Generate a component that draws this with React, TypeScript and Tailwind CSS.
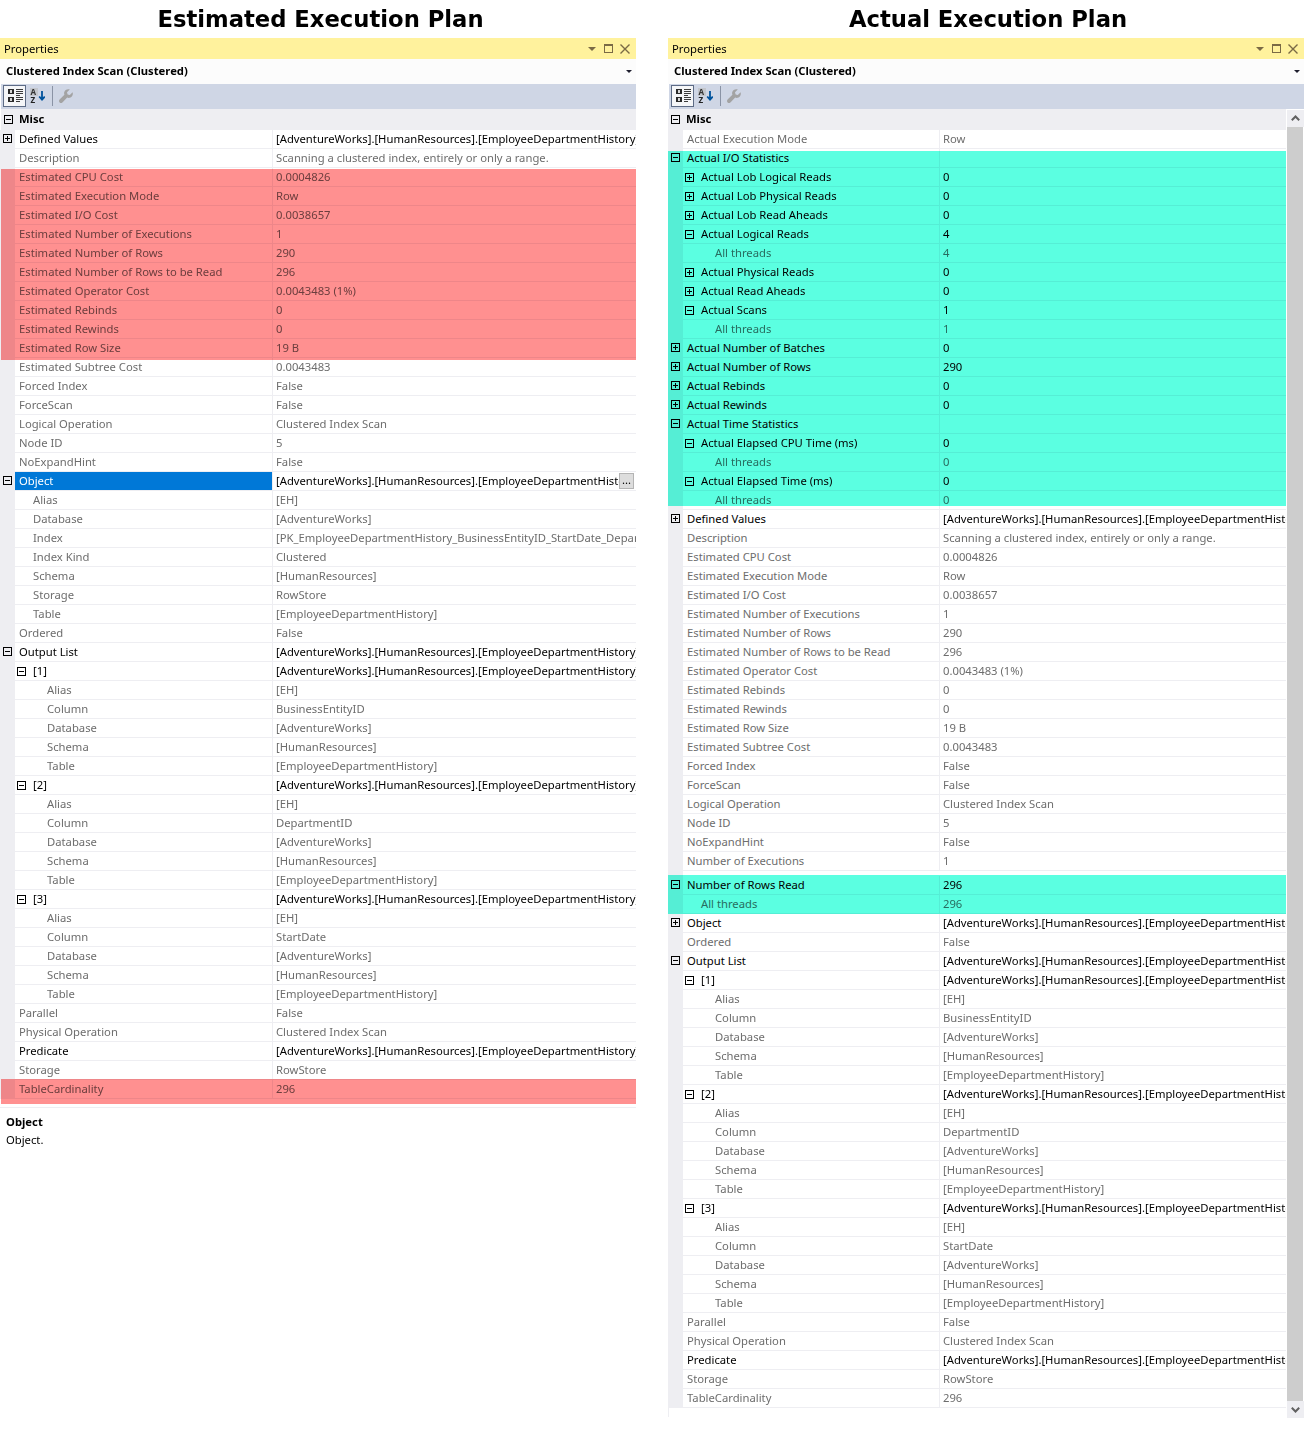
type RowData = [number, string, string, string?];

const FULL = "[AdventureWorks].[HumanResources].[EmployeeDepartmentHistory].[BusinessEntityID]";

const OUTPUT_COLUMN = (n: string, col: string): RowData[] => [
  [1, n, FULL, "-"],
  [2, "Alias", "[EH]"],
  [2, "Column", col],
  [2, "Database", "[AdventureWorks]"],
  [2, "Schema", "[HumanResources]"],
  [2, "Table", "[EmployeeDepartmentHistory]"],
];

const OUTPUT_LIST: RowData[] = [
  [0, "Output List", FULL, "-"],
  ...OUTPUT_COLUMN("[1]", "BusinessEntityID"),
  ...OUTPUT_COLUMN("[2]", "DepartmentID"),
  ...OUTPUT_COLUMN("[3]", "StartDate"),
  [0, "Parallel", "False"],
  [0, "Physical Operation", "Clustered Index Scan"],
  [0, "Predicate", FULL],
  [0, "Storage", "RowStore"],
  [0, "TableCardinality", "296"],
];

const ESTIMATES: RowData[] = [
  [0, "Estimated CPU Cost", "0.0004826"],
  [0, "Estimated Execution Mode", "Row"],
  [0, "Estimated I/O Cost", "0.0038657"],
  [0, "Estimated Number of Executions", "1"],
  [0, "Estimated Number of Rows", "290"],
  [0, "Estimated Number of Rows to be Read", "296"],
  [0, "Estimated Operator Cost", "0.0043483 (1%)"],
  [0, "Estimated Rebinds", "0"],
  [0, "Estimated Rewinds", "0"],
  [0, "Estimated Row Size", "19 B"],
  [0, "Estimated Subtree Cost", "0.0043483"],
  [0, "Forced Index", "False"],
  [0, "ForceScan", "False"],
  [0, "Logical Operation", "Clustered Index Scan"],
  [0, "Node ID", "5"],
  [0, "NoExpandHint", "False"],
];

const HEAD: RowData[] = [
  [0, "Defined Values", FULL, "+"],
  [0, "Description", "Scanning a clustered index, entirely or only a range."],
];

const LEFT_ROWS: RowData[] = [
  ...HEAD,
  ...ESTIMATES,
  [0, "Object", FULL, "-"],
  [1, "Alias", "[EH]"],
  [1, "Database", "[AdventureWorks]"],
  [1, "Index", "[PK_EmployeeDepartmentHistory_BusinessEntityID_StartDate_DepartmentID]"],
  [1, "Index Kind", "Clustered"],
  [1, "Schema", "[HumanResources]"],
  [1, "Storage", "RowStore"],
  [1, "Table", "[EmployeeDepartmentHistory]"],
  [0, "Ordered", "False"],
  ...OUTPUT_LIST,
];

const RIGHT_TOP: RowData[] = [
  [0, "Actual Execution Mode", "Row"],
  [0, "Actual I/O Statistics", "", "-"],
  [1, "Actual Lob Logical Reads", "0", "+"],
  [1, "Actual Lob Physical Reads", "0", "+"],
  [1, "Actual Lob Read Aheads", "0", "+"],
  [1, "Actual Logical Reads", "4", "-"],
  [2, "All threads", "4"],
  [1, "Actual Physical Reads", "0", "+"],
  [1, "Actual Read Aheads", "0", "+"],
  [1, "Actual Scans", "1", "-"],
  [2, "All threads", "1"],
  [0, "Actual Number of Batches", "0", "+"],
  [0, "Actual Number of Rows", "290", "+"],
  [0, "Actual Rebinds", "0", "+"],
  [0, "Actual Rewinds", "0", "+"],
  [0, "Actual Time Statistics", "", "-"],
  [1, "Actual Elapsed CPU Time (ms)", "0", "-"],
  [2, "All threads", "0"],
  [1, "Actual Elapsed Time (ms)", "0", "-"],
  [2, "All threads", "0"],
  ...HEAD,
  ...ESTIMATES,
  [0, "Number of Executions", "1"],
];

const RIGHT_BOTTOM: RowData[] = [
  [0, "Number of Rows Read", "296", "-"],
  [1, "All threads", "296"],
  [0, "Object", FULL, "+"],
  [0, "Ordered", "False"],
  ...OUTPUT_LIST,
];

const Expander = ({ kind }: { kind: string }) => (
  <svg width="9" height="9" viewBox="0 0 9 9" className="shrink-0" shapeRendering="crispEdges">
    <rect x="0.5" y="0.5" width="8" height="8" fill="none" stroke="#000" />
    <path d={kind === "+" ? "M2 4.5H7M4.5 2V7" : "M2 4.5H7"} stroke="#000" />
  </svg>
);

const Row = ({ row, nameWidth, selected }: { row: RowData; nameWidth: string; selected?: boolean }) => {
  const [level, name, value, exp] = row;
  const dark = !!exp || name === "Predicate";
  const color = dark ? "text-black" : "text-[#6d6d6d]";
  return (
    <div className="flex h-[19px]">
      <div className="w-[15px] shrink-0 bg-[#eeeef2] pl-[3px] pt-[4px]">
        {level === 0 && exp && <Expander kind={exp} />}
      </div>
      <div className="flex min-w-0 flex-1 border-b border-[#eeeef2] bg-white">
        <div className={`${nameWidth} flex h-[18px] shrink-0 items-center border-r border-[#eeeef2] ${selected ? "bg-[#0078d7] text-white" : color}`}>
          {level === 1 && exp ? (
            <div className="flex items-center gap-[7px] pl-[2px]">
              <Expander kind={exp} />
              <span>{name}</span>
            </div>
          ) : (
            <span className={level === 0 ? "pl-[4px]" : level === 1 ? "pl-[18px]" : "pl-[32px]"}>{name}</span>
          )}
        </div>
        <div className={`relative min-w-0 flex-1 overflow-hidden pl-[3px] ${color}`}>
          {value}
          {selected && (
            <div className="absolute right-0 top-0 h-full w-[17px] bg-white pt-px">
              <div className="flex h-[16px] w-[15px] items-center justify-center border border-[#b4b4b4] bg-[#dddddd] pb-[2px] text-black">
                ...
              </div>
            </div>
          )}
        </div>
      </div>
    </div>
  );
};

const Category = () => (
  <div className="flex h-[20px] bg-[#eeeef2] font-bold text-black">
    <div className="w-[15px] shrink-0 pl-[3px] pt-[5px]">
      <Expander kind="-" />
    </div>
    <span className="pl-[3px]">Misc</span>
  </div>
);

const CategorizedIcon = () => (
  <svg width="15" height="14" viewBox="0 0 15 14" shapeRendering="crispEdges">
    <rect x="0" y="0" width="6" height="5" fill="#2a2a2a" />
    <rect x="2" y="1" width="2" height="3" fill="#d8d8d8" />
    <rect x="0" y="8" width="6" height="5" fill="#2a2a2a" />
    <rect x="2" y="9" width="2" height="3" fill="#d8d8d8" />
    <path d="M8 .5h7M8 2.5h7M8 4.5h7M8 6.5h4M8 8.5h7M8 10.5h7M8 12.5h4" stroke="#3c3c3c" />
  </svg>
);

const SortIcon = () => (
  <svg width="15" height="16" viewBox="0 0 15 16">
    <rect x="0" y="0" width="8" height="8" fill="#c3c6cc" />
    <text x="0.6" y="7" fontSize="8" fontWeight="700" fill="#333">A</text>
    <text x="0.6" y="15" fontSize="8" fontWeight="700" fill="#222">Z</text>
    <path d="M12 3v8.5M9.2 8.5l2.8 3.2 2.8-3.2" fill="none" stroke="#00539c" strokeWidth="1.8" />
  </svg>
);

const WrenchIcon = () => (
  <svg width="14" height="14" viewBox="0 0 14 14">
    <path
      d="M13.6 3.2 10.8 6 8.6 5.4 8 3.2 10.8.4C8.6-.4 5.8.8 5.2 3.2 5 4.2 5.1 5 5.4 5.8L.6 10.6C-.2 11.4-.2 12.6.6 13.4 1.4 14.2 2.6 14.2 3.4 13.4L8.2 8.6C9 8.9 9.8 9 10.8 8.8 13.2 8.2 14.4 5.4 13.6 3.2Z"
      fill="#a3a3a3"
    />
  </svg>
);

const TitleIcons = () => (
  <div className="flex items-center">
    <svg width="8" height="4" viewBox="0 0 8 4"><path d="M0 0h8L4 4z" fill="#7a6a45" /></svg>
    <svg width="9" height="9" viewBox="0 0 9 9" className="ml-[8px]" shapeRendering="crispEdges">
      <rect x="0.5" y="0.5" width="8" height="8" fill="none" stroke="#7a6a45" />
      <path d="M0 1.5h9" stroke="#7a6a45" />
    </svg>
    <svg width="10" height="10" viewBox="0 0 10 10" className="ml-[7px]">
      <path d="M.5.5l9 9M9.5.5l-9 9" stroke="#7a6a45" strokeWidth="1.4" />
    </svg>
  </div>
);

const Header = () => (
  <>
    <div className="flex h-[21px] items-center justify-between bg-[#fff29d] pl-[4px] pr-[6px] text-black">
      <span>Properties</span>
      <TitleIcons />
    </div>
    <div className="flex h-[25px] items-center justify-between bg-[#fcfcfc] pb-px pl-[6px] pr-[4px] font-bold text-black">
      <span>Clustered Index Scan (Clustered)</span>
      <svg width="6" height="3" viewBox="0 0 6 3"><path d="M0 0h6L3 3z" fill="#1e1e2e" /></svg>
    </div>
    <div className="border-l border-white">
      <div className="flex h-[25px] items-center bg-[#cfd6e5] pb-px pl-[2px]">
        <div className="flex h-[22px] w-[23px] items-center justify-center border border-[#5d6b85] bg-[#f5f6f8] pl-px">
          <CategorizedIcon />
        </div>
        <div className="ml-[4px]">
          <SortIcon />
        </div>
        <div className="ml-[7px] h-[20px] w-px bg-[#8a93a5]" />
        <div className="ml-[6px]">
          <WrenchIcon />
        </div>
      </div>
    </div>
  </>
);

const LeftPanel = () => (
  <div className="w-[636px] shrink-0">
    <h1 className="flex h-[38px] items-center justify-center pb-px pl-[5px] text-[22.7px] font-bold text-black [font-family:'DejaVu_Sans',sans-serif]">
      Estimated Execution Plan
    </h1>
    <Header />
    <div className="relative">
      <div className="border-b border-[#eeeef2] pb-[8px]">
        <div className="border-l border-white">
          <div className="bg-[#eeeef2] pt-px">
            <Category />
          </div>
        </div>
        {LEFT_ROWS.map((row, i) => (
          <Row key={i} row={row} nameWidth="w-[258px]" selected={i === 18} />
        ))}
      </div>
      <div className="absolute left-px right-0 top-[60px] h-[191px] bg-[#ff9090] mix-blend-multiply" />
      <div className="absolute left-px right-0 top-[970px] h-[25px] bg-[#ff9090] mix-blend-multiply" />
    </div>
    <div className="pl-[6px] pt-[5px] text-black">
      <div className="h-[18px] font-bold">Object</div>
      <div className="h-[18px]">Object.</div>
    </div>
  </div>
);

const Chevron = ({ up }: { up?: boolean }) => (
  <svg width="9" height="6" viewBox="0 0 9 6">
    <path d={up ? "M.8 5.2L4.5 1.5l3.7 3.7" : "M.8.8L4.5 4.5 8.2.8"} fill="none" stroke="#606060" strokeWidth="2" />
  </svg>
);

const RightPanel = () => (
  <div className="w-[636px] shrink-0">
    <h1 className="flex h-[38px] items-center justify-center pb-px pl-[4px] text-[22.7px] font-bold text-black [font-family:'DejaVu_Sans',sans-serif]">
      Actual Execution Plan
    </h1>
    <Header />
    <div className="flex gap-px">
      <div className="relative w-[618px]">
        <div className="bg-[#eeeef2] pt-px">
          <Category />
        </div>
        {RIGHT_TOP.map((row, i) => (
          <Row key={i} row={row} nameWidth="w-[257px]" />
        ))}
        <div className="flex h-[5px]">
          <div className="w-[15px] bg-[#eeeef2]" />
          <div className="flex-1 bg-white" />
        </div>
        {RIGHT_BOTTOM.map((row, i) => (
          <Row key={i} row={row} nameWidth="w-[257px]" />
        ))}
        <div className="h-[9px] border-l border-[#eeeef2] bg-white" />
        <div className="absolute left-0 right-0 top-[42px] h-[355px] bg-[#5bffe1] mix-blend-multiply" />
        <div className="absolute left-0 right-0 top-[766px] h-[39px] bg-[#5bffe1] mix-blend-multiply" />
      </div>
      <div className="flex w-[17px] flex-col pt-px">
        <div className="flex h-[17px] items-center justify-center bg-[#eeeef2] pb-px">
          <Chevron up />
        </div>
        <div className="mr-px h-[1274px] bg-[#cdcdcd]" />
        <div className="flex h-[17px] items-center justify-center bg-[#eeeef2]">
          <Chevron />
        </div>
      </div>
    </div>
  </div>
);

export default function App() {
  return (
    <div className="flex min-h-[1438px] gap-[32px] bg-white text-[11.25px] leading-[18px] whitespace-nowrap [font-family:'Noto_Sans',sans-serif]">
      <LeftPanel />
      <RightPanel />
    </div>
  );
}
